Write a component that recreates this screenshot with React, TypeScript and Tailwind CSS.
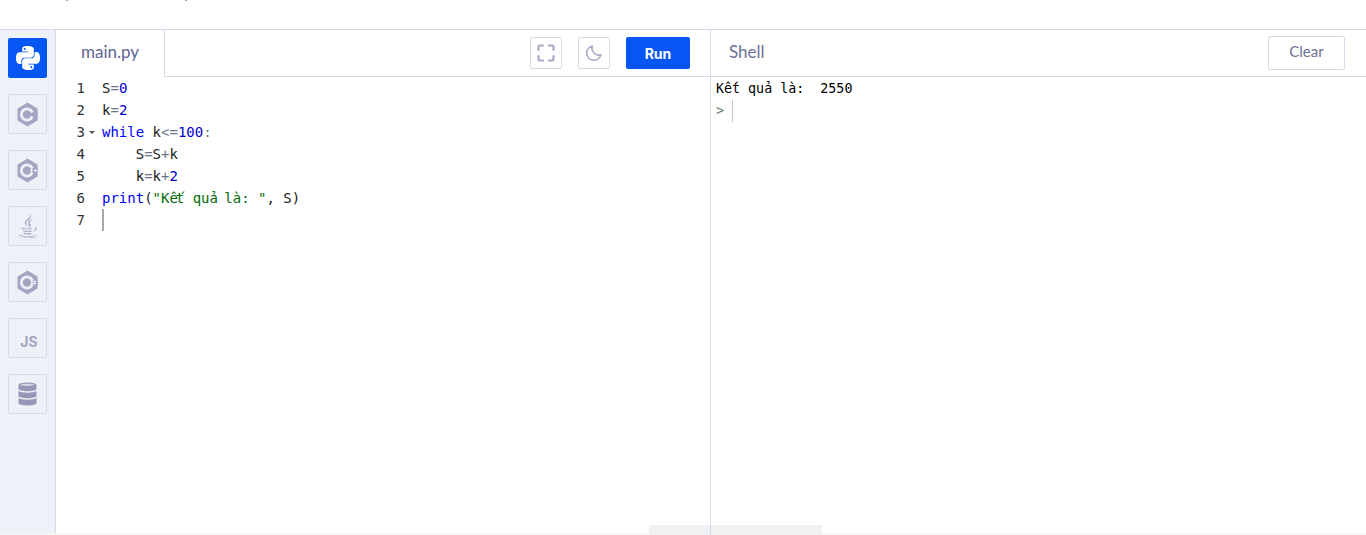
import { FaJava } from "react-icons/fa";
import { SiPython } from "react-icons/si";

const mono = "font-['DejaVu_Sans_Mono',monospace]";

const kw = "text-[#0000ff]";
const op = "text-[#687687]";
const num = "text-[#0000cd]";
const str = "text-[#036a07]";
const id = "text-[#222222]";
// these two letters come out narrower than the grid in the reference editor
const strTight = "text-[#036a07] tracking-[-2.1px]";

function Code({ lines }: { lines: [string, string][][] }) {
  return (
    <>
      {lines.map((parts, i) => (
        <div key={i} className="flex h-[22px] leading-[22px]">
          <div className="relative w-[29px] text-right text-[#333333]">
            {i + 1}
            {i === 2 && (
              <span className="absolute left-[33px] top-[10px] h-0 w-0 border-x-[3px] border-t-[3px] border-x-transparent border-t-[#555555]" />
            )}
          </div>
          <div className="ml-[17px] whitespace-pre">
            {parts.map(([cls, text], j) => (
              <span key={j} className={cls}>
                {text}
              </span>
            ))}
            {i === 6 && <span className="inline-block h-[22px] w-[2px] bg-[#a8a8a8] align-top" />}
          </div>
        </div>
      ))}
    </>
  );
}

const code: [string, string][][] = [
  [[id, "S"], [op, "="], [num, "0"]],
  [[id, "k"], [op, "="], [num, "2"]],
  [[kw, "while"], [id, " k"], [op, "<="], [num, "100"], [op, ":"]],
  [[id, "    S"], [op, "="], [id, "S"], [op, "+"], [id, "k"]],
  [[id, "    k"], [op, "="], [id, "k"], [op, "+"], [num, "2"]],
  [
    [kw, "print"],
    [id, "("],
    [str, "\"K"],
    [strTight, "ế"],
    [str, "t qu"],
    [strTight, "ả"],
    [str, " là: \""],
    [id, ", S)"],
  ],
  [],
];

function SideButton({ children, active }: { children: React.ReactNode; active?: boolean }) {
  return (
    <button
      className={
        active
          ? "flex h-10 w-[39px] items-center justify-center rounded-[2px] bg-[#0556f3] text-white"
          : "flex h-10 w-[39px] items-center justify-center rounded-[2px] border border-[#d5d9e8] text-[#a3a5c2]"
      }
    >
      {children}
    </button>
  );
}

function HexIcon({ marks }: { marks?: string }) {
  return (
    <svg width="21" height="25" viewBox="0 0 21 25">
      <path fill="currentColor" d="M10.5.5 20.5 6.5v12l-10 6-10-6v-12z" />
      <circle cx="10" cy="12.5" r="5.6" fill="none" stroke="#eef1f7" strokeWidth="2.8" />
      <path fill="currentColor" d="M11.5 12.5 20.5 8v9z" />
      {marks && <path stroke="#eef1f7" strokeWidth="1" fill="none" d={marks} />}
    </svg>
  );
}

function DbIcon() {
  return (
    <svg width="19" height="24" viewBox="0 0 19 24" className="text-[#9597b8]">
      <path fill="currentColor" d="M.5 3C.5 1.5 4.5.5 9.5.5s9 1 9 2.5v4c0 1.200-4 2.200-9 2.200s-9-1-9-2.200z" />
      <path fill="#d6d8e6" d="M2 2.800c1.500-.7 4.200-1.100 7.500-1.100s6 .4 7.500 1.100c-1.500.7-4.200 1.100-7.500 1.100S3.500 3.500 2 2.800z" />
      <path fill="currentColor" d="M.5 9c1.500 1 5 1.700 9 1.700s7.500-.7 9-1.700v5c0 1.200-4 2.200-9 2.200s-9-1-9-2.200z" />
      <path fill="currentColor" d="M.5 16c1.500 1 5 1.700 9 1.700s7.500-.7 9-1.700v5c0 1.500-4 2.500-9 2.500s-9-1-9-2.500z" />
    </svg>
  );
}

export default function App() {
  return (
    <div className="relative flex h-[535px] w-[1366px] flex-col overflow-hidden bg-white font-['Lato',sans-serif]">
      {/* page title above is scrolled off, only descenders are left */}
      <span className="absolute left-[66px] top-0 h-px w-[2px] bg-[#a8a8a8]" />
      <span className="absolute left-[185px] top-0 h-px w-[2px] bg-[#a0a0a0]" />

      <div className="h-[30px] shrink-0 border-b border-[#d5d9e8]" />

      <div className="flex min-h-0 flex-1">
        <aside className="flex w-[56px] shrink-0 flex-col gap-4 border-r border-[#d5d9e8] bg-[#eef1f7] pl-2 pt-2">
          <SideButton active>
            <SiPython size={24} />
          </SideButton>
          <SideButton>
            <HexIcon />
          </SideButton>
          <SideButton>
            <HexIcon marks="M14.500 11v3M13 12.500h3M18.500 11v3M17 12.500h3" />
          </SideButton>
          <SideButton>
            <FaJava size={24} className="text-[#9c9ebd]" />
          </SideButton>
          <SideButton>
            <HexIcon marks="M15 10.500v4M17.500 10.500v4M13.500 11.500h5.500M13.500 13.500h5.500" />
          </SideButton>
          <SideButton>
            <span className="mt-[7px] ml-[3px] font-['Inter',sans-serif] text-[14px] font-bold">JS</span>
          </SideButton>
          <SideButton>
            <DbIcon />
          </SideButton>
        </aside>

        <section className="flex w-[655px] shrink-0 flex-col border-r border-[#d5d9e8]">
          <div className="flex h-[47px] items-stretch border-b border-[#d5d9e8]">
            <div className="-mb-px flex w-[109px] items-center justify-center border-r border-[#d5d9e8] bg-white pb-[3px] text-[17px] text-[#5f6391]">
              main.py
            </div>
            <div className="ml-auto flex items-start gap-4 pr-5 pt-[7px]">
              <button className="flex h-8 w-8 items-center justify-center rounded-[2px] border border-[#d5d9e8]">
                <svg width="18" height="18" viewBox="0 0 18 18" fill="none" stroke="#a7a9c5" strokeWidth="2.2" strokeLinecap="round">
                  <path d="M1.5 6V3a1.5 1.5 0 0 1 1.5-1.5h3M12 1.5h3A1.5 1.500 0 0 1 16.5 3v3M16.5 12v3a1.5 1.5 0 0 1-1.5 1.5h-3M6 16.5H3A1.5 1.5 0 0 1 1.5 15v-3" />
                </svg>
              </button>
              <button className="flex h-8 w-8 items-center justify-center rounded-[2px] border border-[#d5d9e8]">
                <svg width="18" height="18" viewBox="0 0 24 24" fill="none" stroke="#a7a9c5" strokeWidth="2.2">
                  <path d="M21 14.5A9.5 9.5 0 0 1 9.5 3a9.5 9.5 0 1 0 11.5 11.5z" />
                </svg>
              </button>
              <button className="h-8 w-16 rounded-[2px] bg-[#0556f3] font-['Inter',sans-serif] text-[14px] font-bold text-white">
                Run
              </button>
            </div>
          </div>
          <div className={`text-[14px] ${mono}`}>
            <Code lines={code} />
          </div>
        </section>

        <section className="flex min-w-0 flex-1 flex-col">
          <div className="flex h-[47px] items-center justify-between border-b border-[#d5d9e8] pl-[18px] pr-[21px]">
            <span className="pb-[2px] text-[17px] text-[#6d7193]">Shell</span>
            <button className="mb-[1px] h-[34px] w-[77px] rounded-[2px] border border-[#d5d9e8] pb-[2px] text-[15px] text-[#6d7193]">
              Clear
            </button>
          </div>
          <div className={`pl-[5px] pt-[1px] text-[13.33px] text-black ${mono}`}>
            <div className="h-[22px] whitespace-pre leading-[22px]">Kết quả là:  2550</div>
            <div className="flex h-[22px] leading-[22px]">
              <span className="w-[16px] text-[#5f7a6a]">&gt;</span>
              <span className="h-[22px] w-px bg-[#c4c4c4]" />
            </div>
          </div>
        </section>
      </div>

      <div className="absolute bottom-0 left-0 h-[2px] w-full bg-[#f4f5f7]" />
      <div className="absolute bottom-0 left-[649px] h-[10px] w-[173px] bg-[#f0f1f3]" />
      <div className="absolute bottom-0 left-[710px] h-[10px] w-px bg-[#d5d9e8]" />
    </div>
  );
}
